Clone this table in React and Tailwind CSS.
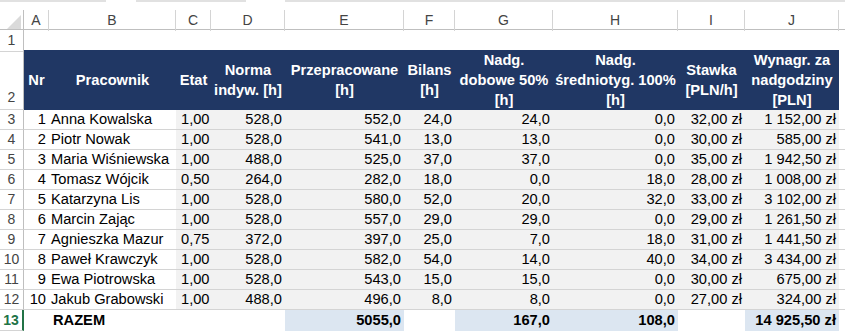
import React from 'react';

const COLS = 'grid grid-cols-[24px_25px_127px_35px_74px_119px_51px_98px_125px_67px_94px_1fr]';

const rows = [
  ['1', 'Anna Kowalska', '1,00', '528,0', '552,0', '24,0', '24,0', '0,0', '32,00 zł', '1 152,00 zł'],
  ['2', 'Piotr Nowak', '1,00', '528,0', '541,0', '13,0', '13,0', '0,0', '30,00 zł', '585,00 zł'],
  ['3', 'Maria Wiśniewska', '1,00', '488,0', '525,0', '37,0', '37,0', '0,0', '35,00 zł', '1 942,50 zł'],
  ['4', 'Tomasz Wójcik', '0,50', '264,0', '282,0', '18,0', '0,0', '18,0', '28,00 zł', '1 008,00 zł'],
  ['5', 'Katarzyna Lis', '1,00', '528,0', '580,0', '52,0', '20,0', '32,0', '33,00 zł', '3 102,00 zł'],
  ['6', 'Marcin Zając', '1,00', '528,0', '557,0', '29,0', '29,0', '0,0', '29,00 zł', '1 261,50 zł'],
  ['7', 'Agnieszka Mazur', '0,75', '372,0', '397,0', '25,0', '7,0', '18,0', '31,00 zł', '1 441,50 zł'],
  ['8', 'Paweł Krawczyk', '1,00', '528,0', '582,0', '54,0', '14,0', '40,0', '34,00 zł', '3 434,00 zł'],
  ['9', 'Ewa Piotrowska', '1,00', '528,0', '543,0', '15,0', '15,0', '0,0', '30,00 zł', '675,00 zł'],
  ['10', 'Jakub Grabowski', '1,00', '488,0', '496,0', '8,0', '8,0', '0,0', '27,00 zł', '324,00 zł'],
];

const headers = [
  ['Nr'],
  ['Pracownik'],
  ['Etat'],
  ['Norma', 'indyw. [h]'],
  ['Przepracowane', '[h]'],
  ['Bilans', '[h]'],
  ['Nadg.', 'dobowe 50%', '[h]'],
  ['Nadg.', 'średniotyg. 100%', '[h]'],
  ['Stawka', '[PLN/h]'],
  ['Wynagr. za', 'nadgodziny', '[PLN]'],
];

const letters = ['A', 'B', 'C', 'D', 'E', 'F', 'G', 'H', 'I', 'J'];

const RowHead = ({ n, tall, active }) => (
  <div
    className={`flex justify-center border-b border-[#d4d4d4] text-[14px] ${
      tall ? 'items-end pb-[1px]' : 'items-center'
    } ${active ? 'border-r-2 border-r-[#217346] text-[#217346]' : 'border-r border-r-[#bfbfbf] text-[#444]'}`}
  >
    {n}
  </div>
);

export default function App() {
  return (
    <div className="w-[845px] h-[333px] overflow-hidden bg-white text-black font-['Liberation_Sans',Arial,sans-serif]">
      {/* remains of the formula bar */}
      <div className="h-[10px] relative">
        <div className="flex h-[2px]">
          <div className="w-[106px] bg-[#e1e1e1]" />
          <div className="w-[30px]" />
          <div className="w-[110px] bg-[#e1e1e1]" />
          <div className="w-[39px]" />
          <div className="flex-1 bg-[#e1e1e1]" />
        </div>
      </div>

      {/* column letters */}
      <div className={`${COLS} h-[20px] border-b border-[#bfbfbf] text-[14px] text-[#444]`}>
        <div className="border-r border-[#bfbfbf] flex items-end justify-end pr-[2px] pb-[2px]">
          <svg width="14" height="14" viewBox="0 0 14 14">
            <polygon points="14,0 14,14 0,14" fill="#dadada" />
          </svg>
        </div>
        {letters.map((l) => (
          <div key={l} className="border-r border-[#d4d4d4] flex items-center justify-center">
            {l}
          </div>
        ))}
        <div />
      </div>

      {/* row 1 */}
      <div className={`${COLS} h-[20px]`}>
        <RowHead n="1" />
        <div className="col-span-11" />
      </div>

      {/* row 2: table header */}
      <div className={`${COLS} h-[60px]`}>
        <RowHead n="2" tall />
        {headers.map((h, i) => (
          <div
            key={i}
            className="bg-[#203764] text-white font-bold text-[14.67px] leading-[20px] flex flex-col items-center justify-center text-center whitespace-nowrap"
          >
            {h.map((line) => (
              <span key={line}>{line}</span>
            ))}
          </div>
        ))}
        <div />
      </div>

      {/* data rows */}
      {rows.map((r, idx) => (
        <div key={idx} className={`${COLS} h-[20px] text-[14.67px] leading-[19px]`}>
          <RowHead n={idx + 3} />
          <div className="border-b border-[#d4d4d4] text-right pr-[3px]">{r[0]}</div>
          <div className="border-b border-[#d4d4d4] pl-[2px] whitespace-nowrap">{r[1]}</div>
          <div className="border-b border-[#d4d4d4] bg-[#f2f2f2] pl-[5px]">{r[2]}</div>
          {r.slice(3).map((v, j) => (
            <div key={j} className="border-b border-[#d4d4d4] bg-[#f2f2f2] text-right pr-[3px] whitespace-nowrap">
              {v}
            </div>
          ))}
          <div className="border-b border-[#d4d4d4]" />
        </div>
      ))}

      {/* totals */}
      <div className={`${COLS} h-[20px] text-[14.67px] leading-[20px] font-bold`}>
        <RowHead n="13" active />
        <div />
        <div className="pl-[4px]">RAZEM</div>
        <div />
        <div />
        <div className="bg-[#dce6f1] text-right pr-[3px]">5055,0</div>
        <div />
        <div className="bg-[#dce6f1] text-right pr-[3px]">167,0</div>
        <div className="bg-[#dce6f1] text-right pr-[3px]">108,0</div>
        <div />
        <div className="bg-[#dce6f1] text-right pr-[3px] whitespace-nowrap">14 925,50 zł</div>
        <div />
      </div>
    </div>
  );
}
